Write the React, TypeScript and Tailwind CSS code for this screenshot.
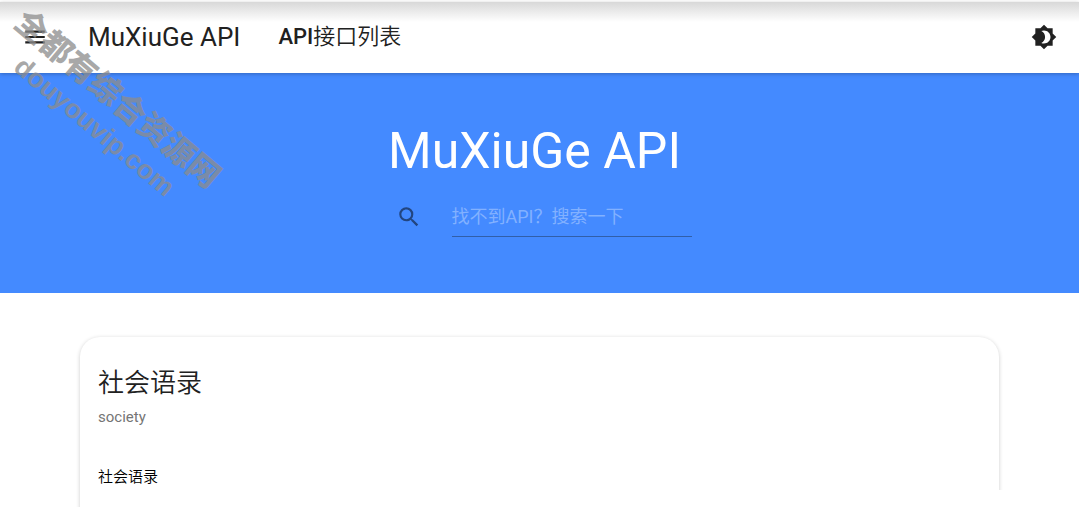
import { MdBrightness4, MdMenu, MdSearch } from 'react-icons/md'

interface ApiItem {
  name: string
  slug: string
  description: string
}

const apiList: ApiItem[] = [{ name: '社会语录', slug: 'society', description: '社会语录' }]

function Toolbar() {
  return (
    <header className="relative z-10 mt-0.5 flex h-[71px] items-center bg-white bg-linear-to-b from-[#d8d8d8] to-white bg-[length:100%_20px] bg-no-repeat px-[22px] pb-0.5 text-[#212121] shadow-[0_1px_4px_rgba(0,0,0,0.25)]">
      <button type="button" aria-label="菜单" className="mr-10">
        <MdMenu size={26} />
      </button>
      <a href="#" className="mr-[38px] text-[26px] leading-9">
        MuXiuGe API
      </a>
      <a href="#list" className="text-[22px] leading-8 font-medium">
        API<span className="font-[350]">接口列表</span>
      </a>
      <button type="button" aria-label="切换主题" className="ml-auto">
        <MdBrightness4 size={26} />
      </button>
    </header>
  )
}

function Hero() {
  return (
    <section className="flex h-[220px] flex-col items-center bg-[#448aff] pt-12">
      <h1 className="mr-2.5 text-[50px] leading-[60px] text-white">MuXiuGe API</h1>
      <form className="mt-4 ml-2 flex items-center">
        <label htmlFor="search" className="mr-[30px] text-[#224580]">
          <MdSearch size={26} aria-label="搜索" />
        </label>
        <input
          id="search"
          type="text"
          placeholder="找不到API？搜索一下"
          className="h-10 w-60 border-b border-[#315fa9] bg-transparent text-[18px] text-white outline-none placeholder:text-[#82b1ff]"
        />
      </form>
    </section>
  )
}

function ApiCard({ name, slug, description }: ApiItem) {
  return (
    <article className="min-h-60 rounded-[20px] bg-white px-[18px] pt-7 text-[#212121] shadow-[0_1px_4px_rgba(0,0,0,0.2)]">
      <h2 className="text-[26px] leading-9 font-[350]">{name}</h2>
      <p className="mt-1 text-[15px] leading-6 text-[#757575]">{slug}</p>
      <p className="mt-9 text-[15px] leading-6 font-[350] text-black">{description}</p>
    </article>
  )
}

function Watermark() {
  return (
    <div className="pointer-events-none absolute top-[77px] -left-[44px] z-20 w-[300px] rotate-40 text-center font-bold whitespace-nowrap text-[#8c8c8c]/75">
      <p className="text-[32px] leading-9 font-black">全都有综合资源网</p>
      <p className="font-['Liberation_Sans',sans-serif] text-[27px] leading-9">douyouvip.com</p>
    </div>
  )
}

export default function App() {
  return (
    <div className="relative h-screen overflow-hidden bg-white font-[Roboto,'Noto_Sans_CJK_SC',sans-serif]">
      <Toolbar />
      <Hero />
      <main id="list" className="px-20 pt-11">
        {apiList.map((item) => (
          <ApiCard key={item.slug} {...item} />
        ))}
      </main>
      <Watermark />
      <div className="absolute right-0 bottom-0 h-[17px] w-20 bg-white" />
    </div>
  )
}
